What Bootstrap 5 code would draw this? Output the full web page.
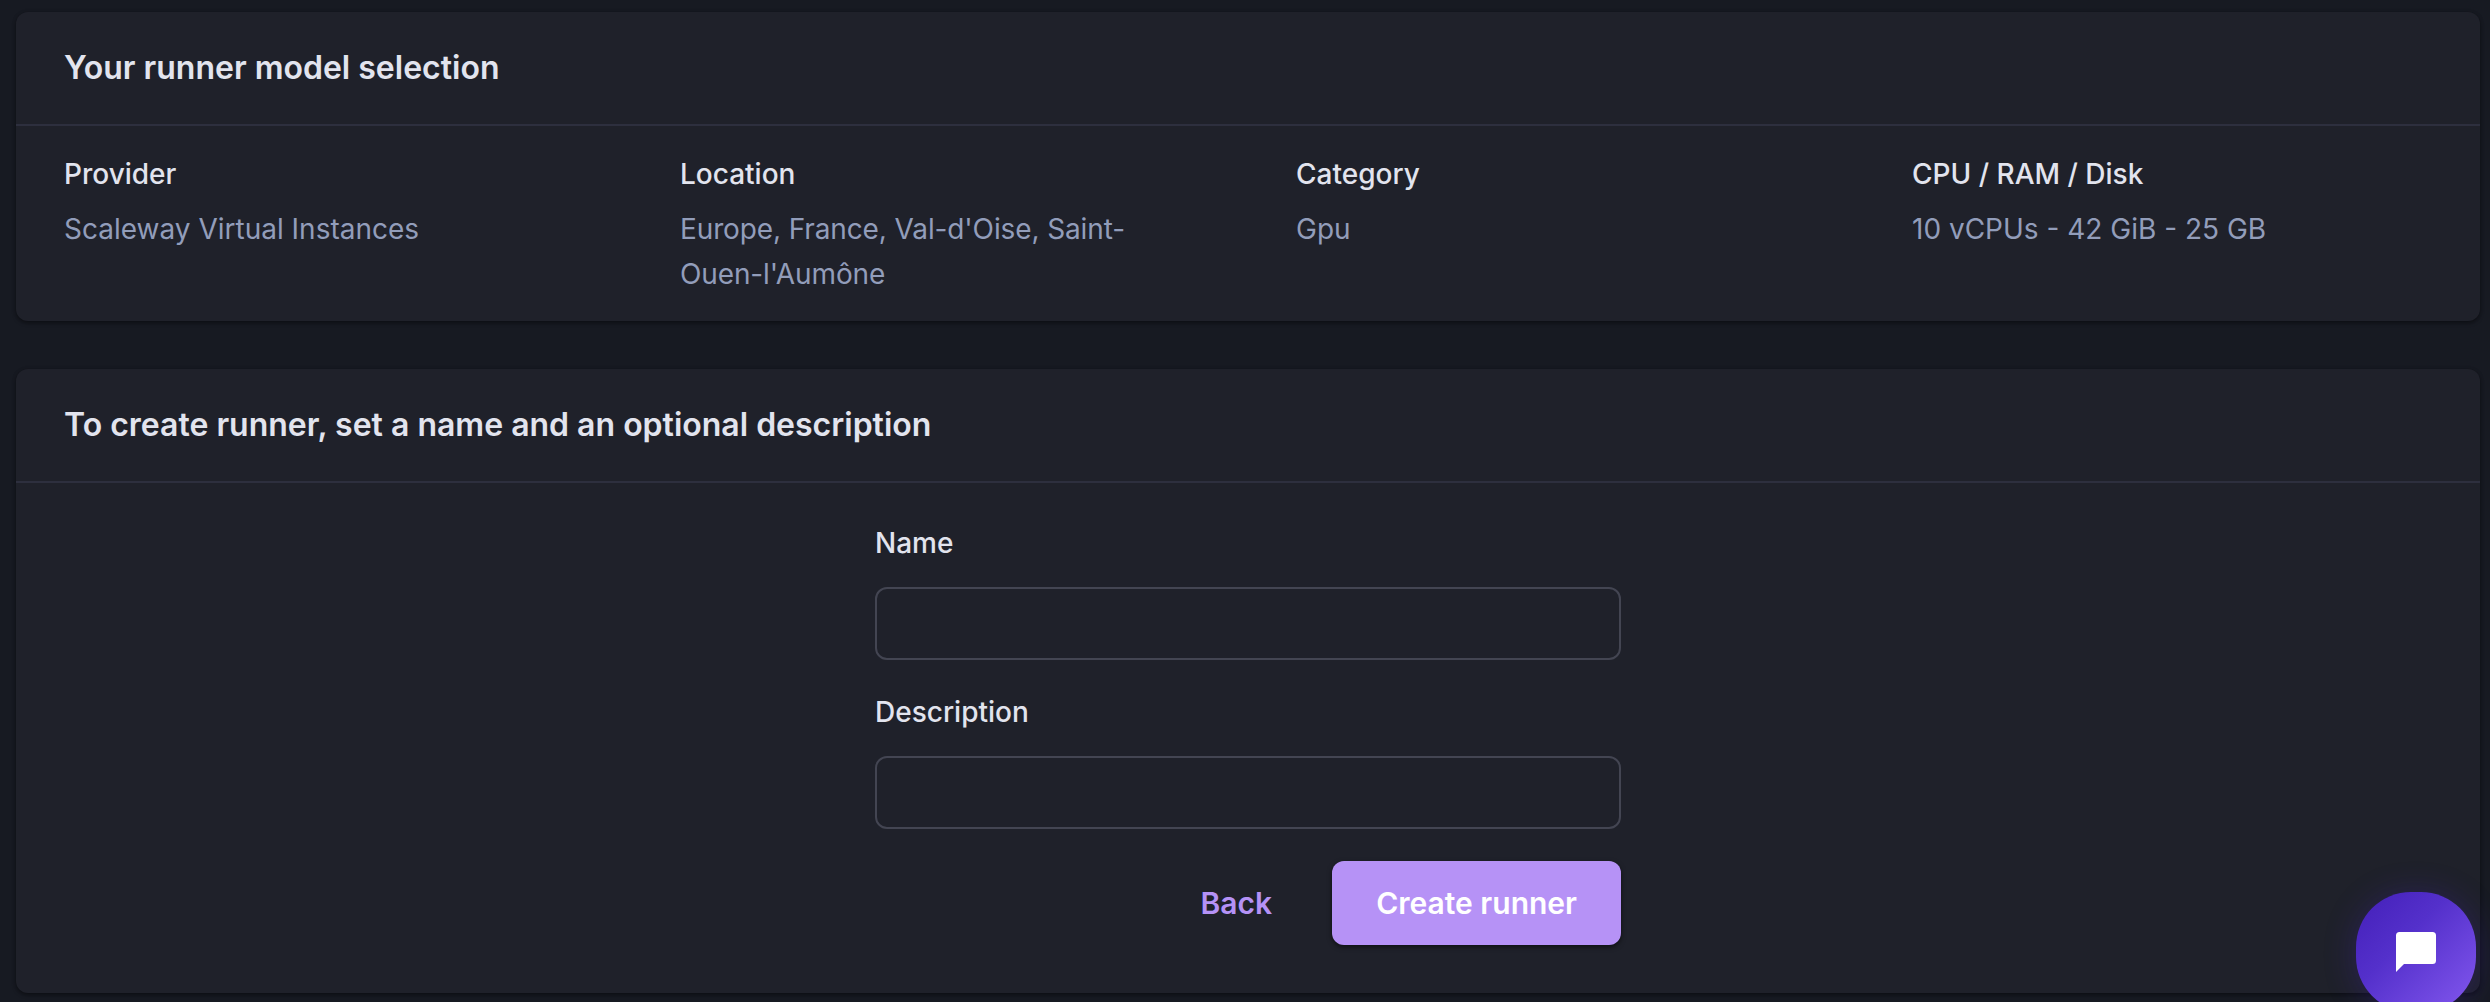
<!DOCTYPE html>
<html lang="en" data-bs-theme="dark">
<head>
<meta charset="utf-8">
<meta name="viewport" content="width=device-width, initial-scale=1">
<title>Create runner</title>
<link href="https://cdn.jsdelivr.net/npm/bootstrap@5.3.0/dist/css/bootstrap.min.css" rel="stylesheet">
<style>
  body {
    background: #171a22;
    color: #e2e4ee;
    font-family: Inter, "Liberation Sans", sans-serif;
    font-size: 28px;
    line-height: 45px;
    height: 100vh;
    overflow: hidden;
  }
  .page { padding: 12px 10px 0 16px; gap: 48px; }
  .panel {
    --bs-card-bg: #1f212a;
    --bs-card-color: #e2e4ee;
    --bs-card-border-width: 0;
    --bs-card-border-radius: 12px;
    --bs-card-inner-border-radius: 12px;
    box-shadow: 0 2px 4px rgba(0, 0, 0, .4), 0 0 4px rgba(0, 0, 0, .12);
  }
  .panel .card-header {
    background: transparent;
    border-bottom: 2px solid #2d2f3e;
    padding: 32px 48px;
  }
  .panel h2 { color: #e2e4ee; font-size: 32px; font-weight: 600; line-height: 48px; }
  .specs { padding: 24px 0; }
  .specs .col { padding: 0 48px; }
  .specs dt { font-weight: 500; line-height: 48px; margin-bottom: 9px; }
  .specs dd { color: #929dba; }
  .specs .location { letter-spacing: -.12px; }
  .form-body { padding: 38px 0 48px; }
  .runner-form { width: 746px; margin-left: 859px; }
  .runner-form .form-label { font-weight: 500; margin-bottom: 21px; }
  .field { margin-bottom: 30px; }
  .runner-form .form-control {
    height: 73px;
    background: transparent;
    border: 2px solid #434552;
    border-radius: 12px;
    font-size: 28px;
  }
  .actions { gap: 16px; padding-top: 2px; }
  .actions .btn {
    height: 84px;
    padding: 0 44px;
    border: 0;
    border-radius: 12px;
    font-size: 30px;
    font-weight: 600;
  }
  .btn-back { --bs-btn-color: #b592f6; }
  .btn-create {
    --bs-btn-color: #fff;
    --bs-btn-bg: #b692f6;
    box-shadow: 0 2px 5px rgba(0, 0, 0, .55);
  }
  .chat-launcher {
    position: fixed;
    left: 2356px;
    top: 892px;
    width: 120px;
    height: 120px;
    border: 0;
    border-radius: 55px;
    background: linear-gradient(135deg, #4723bd 10%, #5430cb 40%, #8257ee 98%);
    box-shadow: 0 2px 32px rgba(71, 35, 189, .3);
  }
</style>
<script src="https://cdn.jsdelivr.net/npm/bootstrap@5.3.0/dist/js/bootstrap.bundle.min.js"></script>
</head>
<body>
<main class="page d-flex flex-column">
  <section class="card panel">
    <div class="card-header"><h2 class="mb-0">Your runner model selection</h2></div>
    <div class="card-body specs">
      <div class="row g-0">
        <dl class="col mb-0"><dt>Provider</dt><dd class="mb-0">Scaleway Virtual Instances</dd></dl>
        <dl class="col mb-0"><dt>Location</dt><dd class="mb-0 location">Europe, France, Val-d'Oise, Saint-Ouen-l'Aumône</dd></dl>
        <dl class="col mb-0"><dt>Category</dt><dd class="mb-0">Gpu</dd></dl>
        <dl class="col mb-0"><dt>CPU / RAM / Disk</dt><dd class="mb-0">10 vCPUs - 42 GiB - 25 GB</dd></dl>
      </div>
    </div>
  </section>

  <section class="card panel">
    <div class="card-header"><h2 class="mb-0">To create runner, set a name and an optional description</h2></div>
    <div class="card-body form-body">
      <form class="runner-form">
        <div class="field">
          <label class="form-label d-block" for="name">Name</label>
          <input class="form-control" id="name" type="text">
        </div>
        <div class="field">
          <label class="form-label d-block" for="description">Description</label>
          <input class="form-control" id="description" type="text">
        </div>
        <div class="actions d-flex justify-content-end">
          <button class="btn btn-back" type="button">Back</button>
          <button class="btn btn-create" type="button">Create runner</button>
        </div>
      </form>
    </div>
  </section>
</main>

<button class="chat-launcher d-flex align-items-center justify-content-center p-0" type="button" aria-label="Open chat">
  <svg width="40" height="40" viewBox="0 0 40 40" fill="#fff" aria-hidden="true"><path d="M3.500 0H36.500Q40 0 40 3.500V28.500Q40 32 36.500 32H8L0 40V3.500Q0 0 3.500 0Z"/></svg>
</button>
</body>
</html>
